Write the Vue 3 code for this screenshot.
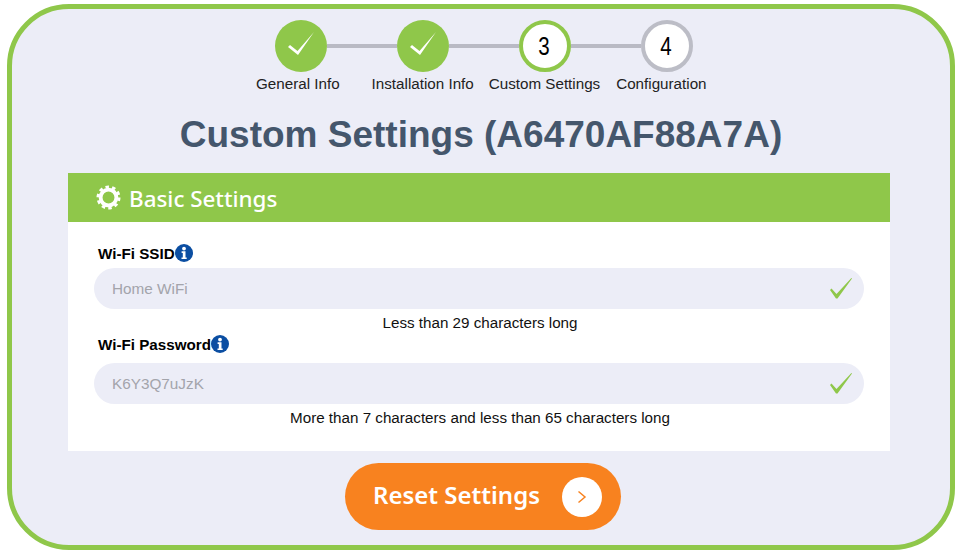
<script setup>
const fields = [
  { label: 'Wi-Fi SSID', value: 'Home WiFi', hint: 'Less than 29 characters long', cls: 'first' },
  { label: 'Wi-Fi Password', value: 'K6Y3Q7uJzK', hint: 'More than 7 characters and less than 65 characters long', cls: 'second' }
]
</script>

<template>
  <div class="frame">
    <div class="stepper">
      <div class="circle done"><svg viewBox="0 0 52 52" width="52" height="52"><polygon points="13,27 15,25 22.5,31 39,12 23,35" fill="#fff" /></svg></div>
      <div class="line"></div>
      <div class="circle done"><svg viewBox="0 0 52 52" width="52" height="52"><polygon points="13,27 15,25 22.5,31 39,12 23,35" fill="#fff" /></svg></div>
      <div class="line"></div>
      <div class="circle active"><span class="num">3</span></div>
      <div class="line"></div>
      <div class="circle todo"><span class="num">4</span></div>
    </div>
    <div class="labels">
      <span>General Info</span>
      <span class="l2">Installation Info</span>
      <span class="l3">Custom Settings</span>
      <span class="l4">Configuration</span>
    </div>
    <h1>Custom Settings (A6470AF88A7A)</h1>
    <section class="card">
      <header>
        <svg class="gear" viewBox="0 0 26 26" width="25" height="25">
          <circle cx="13" cy="13" r="8.2" fill="none" stroke="#fff" stroke-width="4" />
          <circle cx="13" cy="13" r="11" fill="none" stroke="#fff" stroke-width="3" stroke-dasharray="3.6 3.31" />
        </svg>
        <span class="title">Basic Settings</span>
      </header>
      <div class="body">
        <div v-for="f in fields" :key="f.label" class="field" :class="f.cls">
          <div class="label">
            {{ f.label }}
            <svg viewBox="0 0 18 18" width="18" height="18">
              <circle cx="9" cy="9" r="9" fill="#0b4ea2" />
              <circle cx="9" cy="4.6" r="1.9" fill="#fff" />
              <path d="M6.6 7.3h3.9v6.2h1.2v1.600H6.500v-1.600h1.300V8.900H6.600z" fill="#fff" />
            </svg>
          </div>
          <div class="input">
            <span>{{ f.value }}</span>
            <svg viewBox="0 0 22 21" width="22" height="21"><polygon points="0,12 1.5,10.5 6.5,16 21.4,0 22,0.6 7.5,20.6 6,20.6" fill="#8fc74a" /></svg>
          </div>
          <div class="hint">{{ f.hint }}</div>
        </div>
      </div>
    </section>
    <button class="reset" type="button">
      <span class="reset-text">Reset Settings</span>
      <i class="go">
        <svg viewBox="0 0 12 16" width="12" height="16"><path d="M2.5 2.5 9 8l-6.500 5.500" fill="none" stroke="#f8821f" stroke-width="1.500" /></svg>
      </i>
    </button>
  </div>
</template>

<style scoped>
.frame {
  box-sizing: border-box;
  width: 948px;
  height: 546px;
  margin: 4px 0 0 7px;
  padding-top: 11px;
  border: 5px solid #8fc74a;
  border-radius: 62px;
  background: #ecedf7;
  font-family: "Liberation Sans", Arial, sans-serif;
  color: #111;
  display: flex;
  flex-direction: column;
  align-items: center;
}
.stepper {
  display: flex;
  align-items: center;
  margin-left: 6px;
}
.circle {
  box-sizing: border-box;
  width: 52px;
  height: 52px;
  border-radius: 50%;
  display: flex;
  align-items: center;
  justify-content: center;
  color: #000;
  flex: none;
}
.num {
  display: inline-block;
  margin-left: -2px;
  font-size: 25px;
  transform: scaleX(0.82);
}
.done { background: #8fc74a; }
.active { background: #fff; border: 4px solid #8fc74a; }
.todo { background: #fff; border: 4px solid #bcbdc6; }
.line {
  width: 70px;
  height: 4px;
  background: #b9bac4;
}
.labels {
  display: flex;
  align-self: flex-start;
  margin: 3px 0 0 244px;
  font-size: 15.2px;
  line-height: 18px;
  color: #222;
  white-space: nowrap;
}
.l2 { margin-left: 32px; }
.l3 { margin-left: 15px; }
.l4 { margin-left: 16px; }
h1 {
  margin: 20px 0 0;
  font-size: 37px;
  line-height: 44px;
  font-weight: 700;
  color: #44566c;
  white-space: nowrap;
}
.card {
  width: 822px;
  margin: 16px 0 0 -4px;
  background: #fff;
}
.card header {
  height: 49px;
  background: #8fc74a;
  display: flex;
  align-items: center;
  gap: 8px;
  padding-left: 28px;
  color: #fff;
  font-family: "Noto Sans", sans-serif;
  font-size: 22.4px;
  font-weight: 500;
}
.title {
  padding-top: 1px;
}
.body {
  height: 229px;
  padding: 21px 26px 0;
  box-sizing: border-box;
}
.label {
  display: flex;
  align-items: center;
  height: 20px;
  margin-left: 4px;
  font-size: 15.2px;
  font-weight: 700;
  color: #000;
}
.input {
  box-sizing: border-box;
  height: 41px;
  width: 770px;
  margin-top: 5px;
  padding: 0 12px 0 18px;
  border-radius: 21px;
  background: #ecedf7;
  display: flex;
  align-items: center;
  justify-content: space-between;
  font-size: 15.3px;
  color: #a3a4ab;
}
.hint {
  margin-top: 5px;
  padding-left: 2px;
  font-size: 15.2px;
  line-height: 18px;
  text-align: center;
  color: #111;
}
.second { margin-top: 2px; }
.second .input { margin-top: 9px; }
.reset {
  width: 276px;
  height: 67px;
  margin: 12px 0 0 4px;
  padding: 0 19px 0 28px;
  border: 0;
  border-radius: 34px;
  background: #f8821f;
  color: #fff;
  display: flex;
  align-items: center;
  justify-content: space-between;
  font-family: "Noto Sans", sans-serif;
  font-size: 24px;
  font-weight: 600;
}
.reset-text {
  padding-bottom: 4px;
}
.go {
  width: 40px;
  height: 40px;
  border-radius: 50%;
  background: #fff;
  display: flex;
  align-items: center;
  justify-content: center;
}
</style>

<style>
html, body { background: #fff; }
</style>
